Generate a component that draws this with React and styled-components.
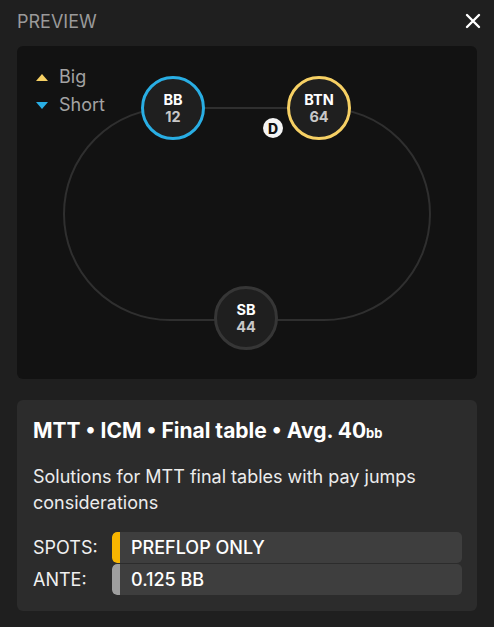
import React from "react";
import styled, { createGlobalStyle } from "styled-components";

const GlobalStyle = createGlobalStyle`
  html, body {
    margin: 0;
    padding: 0;
    background: #1f1f1f;
  }
  body {
    font-family: Inter, "Noto Sans", sans-serif;
    -webkit-font-smoothing: antialiased;
  }
`;

const Page = styled.div`
  width: 494px;
  height: 627px;
  box-sizing: border-box;
  padding: 0 17px 16px 17px;
  background: #1f1f1f;
  display: flex;
  flex-direction: column;
`;

const Header = styled.div`
  height: 46px;
  flex-shrink: 0;
  display: flex;
  align-items: center;
  justify-content: space-between;
  padding-bottom: 4px;
  box-sizing: border-box;
`;

const Title = styled.div`
  color: #9a9a9a;
  font-size: 18px;
`;

const CloseButton = styled.button`
  background: none;
  border: none;
  padding: 0;
  margin-right: -7px;
  width: 22px;
  height: 22px;
  display: flex;
  align-items: center;
  justify-content: center;
  cursor: pointer;
`;

const TablePanel = styled.div`
  position: relative;
  flex-shrink: 0;
  height: 333px;
  background: #121212;
  border-radius: 6px;
  padding: 21px 0 0 19px;
  box-sizing: border-box;
`;

const Legend = styled.div`
  position: relative;
  z-index: 2;
  display: flex;
  flex-direction: column;
  gap: 8px;
`;

const LegendItem = styled.div`
  display: flex;
  align-items: center;
  gap: 11px;
  color: #a3a3a3;
  font-size: 18px;
  line-height: 20px;
`;

const Triangle = styled.span`
  width: 0;
  height: 0;
  border-left: 6px solid transparent;
  border-right: 6px solid transparent;
  ${(p) =>
    p.$up
      ? `border-bottom: 7px solid ${p.$color};`
      : `border-top: 7px solid ${p.$color};`}
`;

const Oval = styled.div`
  position: absolute;
  left: 46px;
  top: 61px;
  width: 368px;
  height: 214px;
  box-sizing: border-box;
  border: 2px solid #2f2f2f;
  border-radius: 107px;
`;

const Seat = styled.div`
  position: absolute;
  left: ${(p) => p.$x - 32}px;
  top: ${(p) => p.$y - 32}px;
  width: 64px;
  height: 64px;
  box-sizing: border-box;
  border-radius: 50%;
  border: 3px solid ${(p) => p.$ring};
  background: #1f1f1f;
  display: flex;
  flex-direction: column;
  align-items: center;
  justify-content: center;
`;

const SeatName = styled.div`
  color: #ffffff;
  font-weight: 700;
  font-size: 14.5px;
  line-height: 17.5px;
`;

const SeatStack = styled.div`
  color: #c8c8c8;
  font-weight: 700;
  font-size: 14.5px;
  line-height: 17.5px;
`;

const Dealer = styled.div`
  position: absolute;
  left: ${(p) => p.$x - 10}px;
  top: ${(p) => p.$y - 10}px;
  width: 20px;
  height: 20px;
  border-radius: 50%;
  background: #f4f4f4;
  color: #111;
  font-weight: 800;
  font-size: 14px;
  display: flex;
  align-items: center;
  justify-content: center;
`;

const InfoCard = styled.div`
  margin-top: 21px;
  flex: 1;
  background: #2c2c2c;
  border-radius: 6px;
  padding: 18px 15px 16px 16px;
  box-sizing: border-box;
  display: flex;
  flex-direction: column;
`;

const CardTitle = styled.div`
  color: #ffffff;
  font-weight: 700;
  font-size: 21px;
  line-height: 26px;
`;

const Unit = styled.span`
  font-size: 13px;
  font-weight: 700;
`;

const Description = styled.div`
  margin-top: 18px;
  color: #ececec;
  font-size: 18px;
  line-height: 26px;
`;

const Rows = styled.div`
  margin-top: 16px;
  display: flex;
  flex-direction: column;
  gap: 1px;
`;

const Row = styled.div`
  display: flex;
  align-items: center;
  height: 31px;
`;

const Label = styled.div`
  width: 79px;
  color: #f0f0f0;
  font-size: 18px;
`;

const ValueBox = styled.div`
  flex: 1;
  height: 31px;
  display: flex;
  align-items: center;
  background: #3e3e3e;
  border-radius: 5px;
  overflow: hidden;
`;

const Bar = styled.div`
  width: 8px;
  align-self: stretch;
  background: ${(p) => p.$color};
  border-radius: 5px 0 0 5px;
`;

const Value = styled.div`
  padding-left: 11px;
  color: #ffffff;
  font-size: 18px;
  font-weight: 500;
`;

const seats = [
  { name: "BB", stack: 12, x: 156, y: 62, ring: "#29aee4" },
  { name: "BTN", stack: 64, x: 302, y: 62, ring: "#f6d064" },
  { name: "SB", stack: 44, x: 229, y: 272, ring: "#363636" },
];

export default function App() {
  return (
    <>
      <GlobalStyle />
      <Page>
        <Header>
          <Title>PREVIEW</Title>
          <CloseButton aria-label="close">
            <svg width="16" height="16" viewBox="0 0 16 16">
              <path
                d="M2 2 L14 14 M14 2 L2 14"
                stroke="#ffffff"
                strokeWidth="2.4"
                strokeLinecap="round"
              />
            </svg>
          </CloseButton>
        </Header>

        <TablePanel>
          <Legend>
            <LegendItem>
              <Triangle $up $color="#f6d064" />
              Big
            </LegendItem>
            <LegendItem>
              <Triangle $color="#29aee4" />
              Short
            </LegendItem>
          </Legend>
          <Oval />
          {seats.map((s) => (
            <Seat key={s.name} $x={s.x} $y={s.y} $ring={s.ring}>
              <SeatName>{s.name}</SeatName>
              <SeatStack>{s.stack}</SeatStack>
            </Seat>
          ))}
          <Dealer $x={256} $y={82}>D</Dealer>
        </TablePanel>

        <InfoCard>
          <CardTitle>
            MTT • ICM • Final table • Avg. 40<Unit>bb</Unit>
          </CardTitle>
          <Description>
            Solutions for MTT final tables with pay jumps considerations
          </Description>
          <Rows>
            <Row>
              <Label>SPOTS:</Label>
              <ValueBox>
                <Bar $color="#f8b500" />
                <Value>PREFLOP ONLY</Value>
              </ValueBox>
            </Row>
            <Row>
              <Label>ANTE:</Label>
              <ValueBox>
                <Bar $color="#9e9e9e" />
                <Value>0.125 BB</Value>
              </ValueBox>
            </Row>
          </Rows>
        </InfoCard>
      </Page>
    </>
  );
}
